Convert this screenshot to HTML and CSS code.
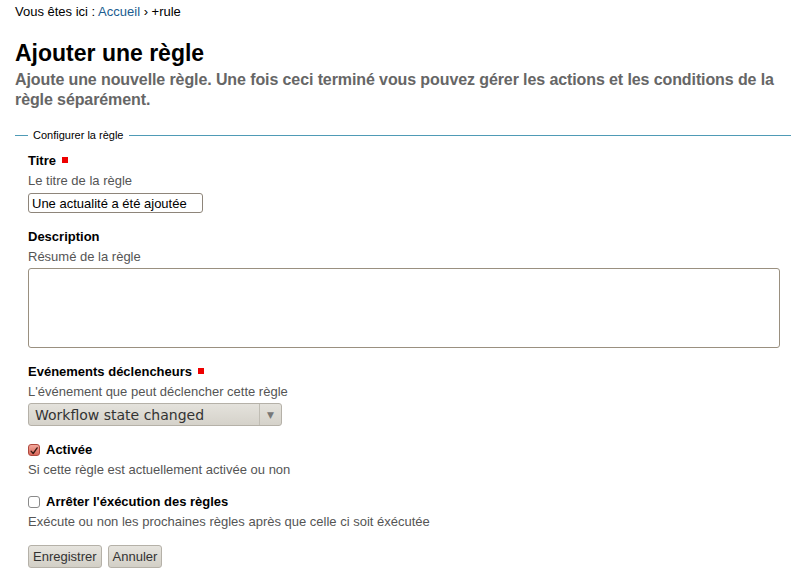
FILE: index.html
```html
<!DOCTYPE html>
<html lang="fr">
<head>
<meta charset="utf-8">
<title>Ajouter une règle</title>
<link rel="stylesheet" href="styles.css">
</head>
<body>
<div class="page">
  <div class="breadcrumbs">Vous êtes ici : <a href="#">Accueil</a> › +rule</div>
  <h1 class="title">Ajouter une règle</h1>
  <p class="description">Ajoute une nouvelle règle. Une fois ceci terminé vous pouvez gérer les actions et les conditions de la règle séparément.</p>
  <form class="form">
    <fieldset class="fieldset">
      <legend class="legend">Configurer la règle</legend>
      <div class="field">
        <label class="label">Titre <span class="required"></span></label>
        <div class="help">Le titre de la règle</div>
        <input class="text-input" type="text" value="Une actualité a été ajoutée">
      </div>
      <div class="field">
        <label class="label">Description</label>
        <div class="help">Résumé de la règle</div>
        <textarea class="textarea"></textarea>
      </div>
      <div class="field">
        <label class="label">Evénements déclencheurs <span class="required"></span></label>
        <div class="help">L'événement que peut déclencher cette règle</div>
        <div class="select">
          <span class="select-text">Workflow state changed</span>
          <span class="select-arrow">▼</span>
        </div>
      </div>
      <div class="field check-field">
        <div class="check-row">
          <span class="checkbox checked"><svg viewBox="0 0 12 12" width="12" height="12"><path d="M2.5 6.2 L5 9 L9.8 2.2" fill="none" stroke="#3a1a14" stroke-width="1.6" stroke-linecap="round" stroke-linejoin="round"/></svg></span>
          <label class="label">Activée</label>
        </div>
        <div class="help">Si cette règle est actuellement activée ou non</div>
      </div>
      <div class="field check-field">
        <div class="check-row">
          <span class="checkbox"></span>
          <label class="label">Arrêter l'éxécution des règles</label>
        </div>
        <div class="help">Exécute ou non les prochaines règles après que celle ci soit éxécutée</div>
      </div>
      <div class="buttons">
        <button type="button" class="button">Enregistrer</button>
        <button type="button" class="button">Annuler</button>
      </div>
    </fieldset>
  </form>
</div>
</body>
</html>
```
FILE: styles.css
```css
html, body {
  margin: 0;
  padding: 0;
  background: #fff;
}
body {
  font-family: "Liberation Sans", Arial, sans-serif;
  font-size: 13px;
  color: #000;
}
.page {
  padding: 4px 0 0 15px;
}
.breadcrumbs {
  font-size: 13px;
  line-height: 16px;
  color: #000;
}
.breadcrumbs a {
  color: #205c90;
  text-decoration: none;
}
.title {
  font-size: 23px;
  font-weight: bold;
  line-height: 28px;
  margin: 19px 0 0 0;
  color: #000;
}
.description {
  font-size: 16px;
  font-weight: bold;
  line-height: 20px;
  letter-spacing: -0.1px;
  color: #666;
  margin: 3px 0 0 0;
}
.form {
  margin: 0;
}
.fieldset {
  margin: 19px 0 0 0;
  padding: 11px 0 0 13px;
  border: none;
  border-top: 1px solid #4f9bb6;
}
.legend {
  font-size: 11px;
  padding: 0 5px;
  color: #000;
}
.field {
  margin-bottom: 15px;
}
.check-field {
  margin-bottom: 14px;
}
.label {
  font-weight: bold;
  font-size: 13px;
  line-height: 18px;
}
.required {
  display: inline-block;
  width: 6px;
  height: 6px;
  background: #e00;
  margin-left: 2px;
  vertical-align: 2px;
}
.help {
  color: #555;
  font-size: 13px;
  line-height: 18px;
  margin-top: 2px;
}
.text-input {
  display: block;
  margin: 3px 0 0 0;
  width: 175px;
  height: 20px;
  box-sizing: border-box;
  border: 1px solid #8e857a;
  border-radius: 3px;
  padding: 0 3px;
  font-family: "Liberation Sans", Arial, sans-serif;
  font-size: 13px;
  color: #000;
}
.textarea {
  display: block;
  margin: 2px 0 0 0;
  width: 752px;
  height: 80px;
  box-sizing: border-box;
  border: 1px solid #9a9080;
  border-radius: 3px;
  resize: none;
}
.select {
  margin-top: 2px;
  width: 254px;
  height: 23px;
  box-sizing: border-box;
  border: 1px solid #b5b1a8;
  border-radius: 3px;
  background: linear-gradient(#e4e2dc, #d5d2ca);
  display: flex;
  align-items: center;
  font-family: "DejaVu Sans", sans-serif;
  font-size: 14px;
  color: #333;
}
.select-text {
  flex: 1;
  padding-left: 6px;
}
.select-arrow {
  width: 21px;
  height: 100%;
  border-left: 1px solid #c0bdb4;
  display: flex;
  align-items: center;
  justify-content: center;
  font-size: 9px;
  color: #777;
}
.check-row {
  display: flex;
  align-items: center;
  gap: 6px;
}
.checkbox {
  width: 12px;
  height: 12px;
  box-sizing: border-box;
  border: 1px solid #8a8a8a;
  border-radius: 3px;
  background: #fff;
  display: inline-flex;
}
.checkbox.checked {
  border-color: #b0483c;
  background: linear-gradient(#f2a89c, #d9675a);
}
.buttons {
  display: flex;
  gap: 6px;
  margin-top: 0;
}
.button {
  font-family: "Liberation Sans", Arial, sans-serif;
  font-size: 13px;
  color: #333;
  height: 23px;
  padding: 0 4px;
  border: 1px solid #b5b1a8;
  border-radius: 3px;
  background: linear-gradient(#e6e4de, #d2cfc6);
}
```
